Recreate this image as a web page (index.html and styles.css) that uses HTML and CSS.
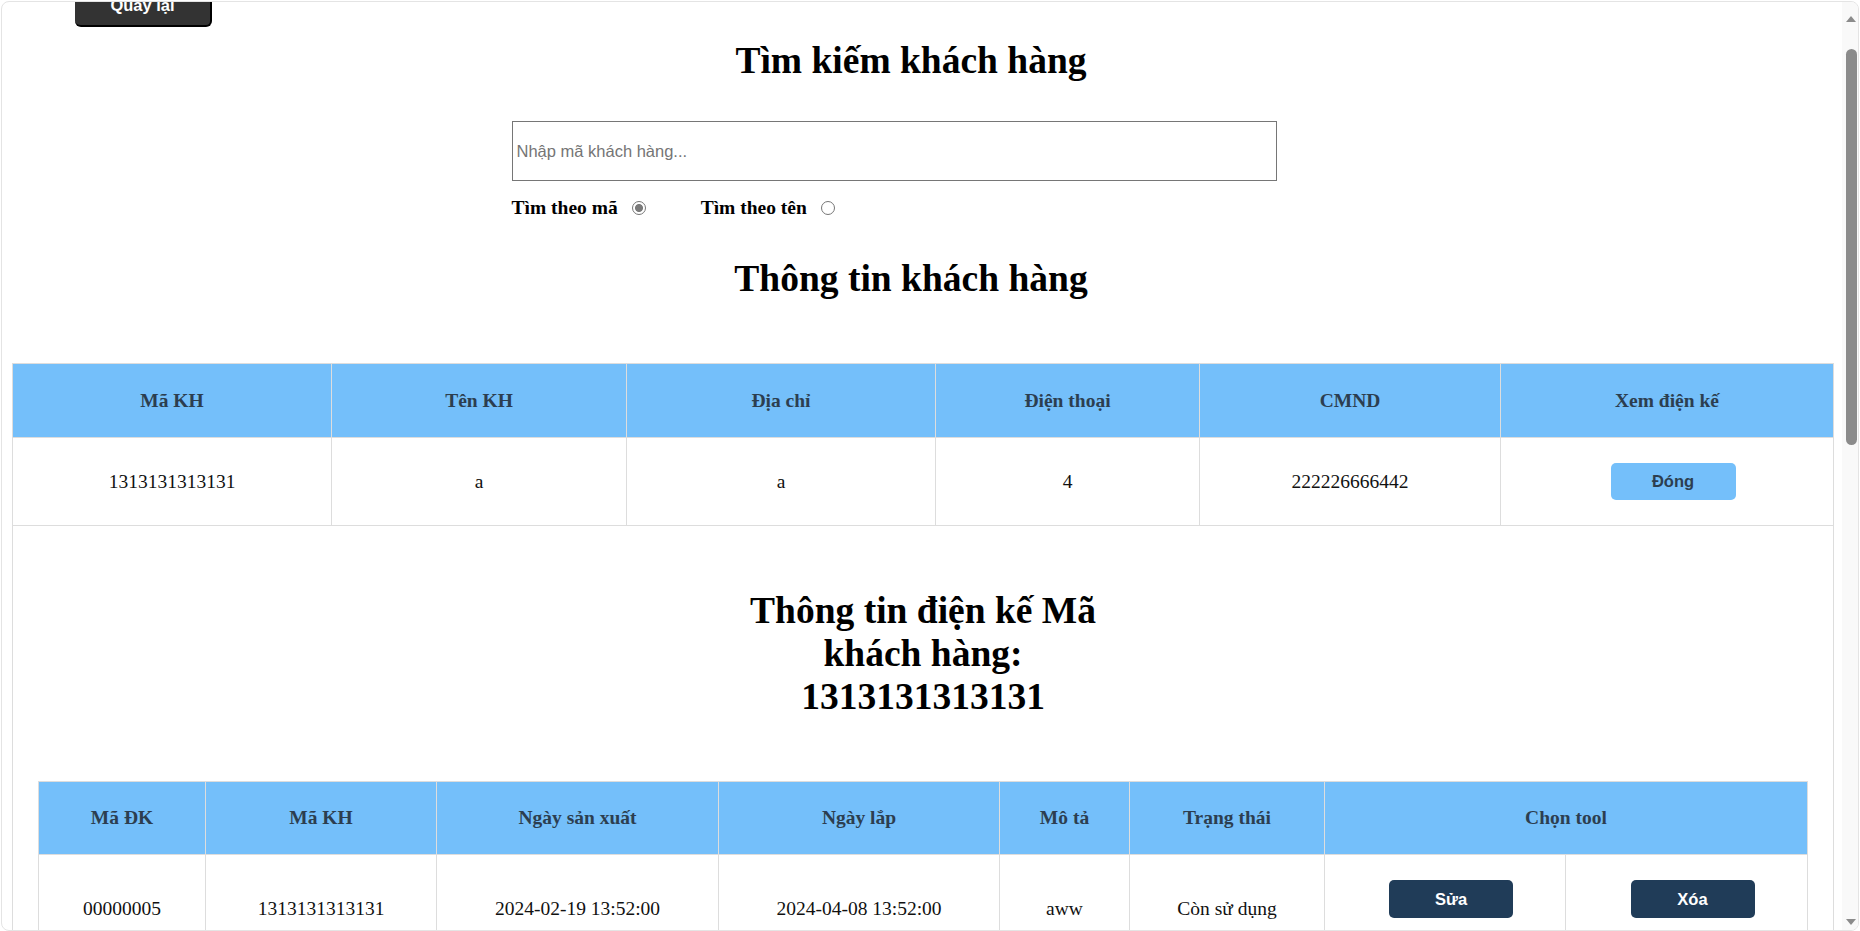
FILE: index.html
```html
<!DOCTYPE html>
<html lang="vi">
  <head>
    <meta charset="UTF-8" />
    <meta name="viewport" content="width=device-width, initial-scale=1.0" />
    <title>Tìm kiếm khách hàng</title>
    <link rel="stylesheet" href="styles.css">
  </head>
  <body>
    <div class="frame">
      <div class="page">
        <!-- nút quay lại -->
        <button class="back-btn">Quay lại</button>

        <!-- khu vực tìm kiếm -->
        <section class="search">
          <h1 class="title">Tìm kiếm khách hàng</h1>
          <div class="search-box">
            <input class="search-input" type="text" placeholder="Nhập mã khách hàng..." />
            <div class="mode-row">
              <label class="mode">Tìm theo mã <input type="radio" name="mode" value="ma" checked /></label>
              <label class="mode">Tìm theo tên <input type="radio" name="mode" value="ten" /></label>
            </div>
          </div>
          <h1 class="title">Thông tin khách hàng</h1>
        </section>

        <!-- bảng khách hàng -->
        <table class="grid customer">
          <colgroup>
            <col /><col /><col /><col /><col /><col />
          </colgroup>
          <thead>
            <tr>
              <th>Mã KH</th>
              <th>Tên KH</th>
              <th>Địa chỉ</th>
              <th>Điện thoại</th>
              <th>CMND</th>
              <th>Xem điện kế</th>
            </tr>
          </thead>
          <tbody>
            <tr>
              <td>1313131313131</td>
              <td>a</td>
              <td>a</td>
              <td>4</td>
              <td>222226666442</td>
              <td><button class="btn btn-light">Đóng</button></td>
            </tr>
            <tr>
              <td class="meter-cell" colspan="6">
                <h1 class="meter-title">Thông tin điện kế Mã khách hàng: 1313131313131</h1>

                <!-- bảng điện kế -->
                <table class="grid meter">
                  <colgroup>
                    <col /><col /><col /><col /><col /><col /><col /><col />
                  </colgroup>
                  <thead>
                    <tr>
                      <th>Mã ĐK</th>
                      <th>Mã KH</th>
                      <th>Ngày sản xuất</th>
                      <th>Ngày lắp</th>
                      <th>Mô tả</th>
                      <th>Trạng thái</th>
                      <th colspan="2">Chọn tool</th>
                    </tr>
                  </thead>
                  <tbody>
                    <tr>
                      <td>00000005</td>
                      <td>1313131313131</td>
                      <td>2024-02-19 13:52:00</td>
                      <td>2024-04-08 13:52:00</td>
                      <td>aww</td>
                      <td>Còn sử dụng</td>
                      <td><button class="btn btn-dark">Sửa</button></td>
                      <td><button class="btn btn-dark">Xóa</button></td>
                    </tr>
                  </tbody>
                </table>
              </td>
            </tr>
          </tbody>
        </table>
      </div>

      <!-- thanh cuộn -->
      <div class="scrollbar">
        <span class="scroll-arrow up"></span>
        <div class="scroll-track"><span class="scroll-thumb"></span></div>
        <span class="scroll-arrow down"></span>
      </div>
    </div>
  </body>
</html>
```

FILE: styles.css
```css
* {
  box-sizing: border-box;
}

body {
  margin: 0;
  padding: 1px 1px 0;

  font-family: "Liberation Serif", "Times New Roman", serif;
  font-size: 19.5px;
  color: #000;
  background-color: #fff;
}

/* khung trang */
.frame {
  display: flex;
  height: calc(100vh - 1px);
  border: 1px solid #e4e4e4;
  border-radius: 8px;
  overflow: hidden;
}

.page {
  flex: 1;
  min-width: 0;
  padding: 0 10px;
}

/* thanh cuộn */
.scrollbar {
  display: flex;
  flex: none;
  flex-direction: column;
  width: 16px;

  background-color: #f9f9f9;
}

.scroll-arrow {
  display: flex;
  justify-content: center;
  height: 17px;
}

.scroll-arrow::before {
  content: "";
  width: 0;
  height: 0;
  border-right: 5px solid transparent;
  border-left: 5px solid transparent;
}

.scroll-arrow.up {
  align-items: flex-end;
  height: 27px;
  padding: 0 0 7px 2px;
}

.scroll-arrow.up::before {
  border-bottom: 6px solid #8b8b8b;
}

.scroll-arrow.down {
  align-items: center;
  padding-left: 2px;
}

.scroll-arrow.down::before {
  border-top: 6px solid #8b8b8b;
}

.scroll-track {
  flex: 1;
}

.scroll-thumb {
  display: block;
  height: 396px;
  margin: 20px 1px 0 4px;
  border-radius: 6px;

  background-color: #8b8b8b;
}

.back-btn {
  display: block;
  width: 137px;
  height: 41px;
  margin: -16px 0 0 63px;
  border: none;
  border-right: 2px solid #000;
  border-bottom: 2px solid #000;
  border-radius: 6px;

  font-family: "Liberation Sans", Arial, sans-serif;
  font-size: 16.5px;
  font-weight: bold;
  color: #fff;

  background-color: #333;
  cursor: pointer;
}

.search {
  padding-right: 22px;
}

.title {
  margin: 12px 0 39px;

  text-align: center;
  font-size: 37.5px;
  line-height: normal;
}

.search .title + .search-box + .title {
  margin: 38px 0 63px;
}

.search-box {
  width: 799px;
  margin: 0 auto;
}

.search-input {
  display: block;
  width: 765px;
  height: 60px;
  padding: 0 4px;
  border: 1px solid #767676;
  border-radius: 0;

  font-family: "Liberation Sans", Arial, sans-serif;
  font-size: 16.5px;
}

.search-input::placeholder {
  color: #757575;
}

.mode-row {
  display: flex;
  align-items: center;
  height: 23px;
  margin-top: 15px;
}

.mode {
  display: flex;
  align-items: center;
  margin-right: 55px;

  font-weight: bold;
}

.mode input {
  appearance: none;
  width: 14px;
  height: 14px;
  margin: 0 0 0 14px;
  border: 1px solid #767676;
  border-radius: 50%;

  background-color: #fff;
}

.mode input:checked {
  background: radial-gradient(circle, #7a7a7a 0 3.6px, #fff 4.4px);
}

/* bảng */
.grid {
  width: 100%;
  border-collapse: collapse;
  table-layout: fixed;
}

.grid th,
.grid td {
  padding: 25px;
  border: 1px solid #ddd;

  text-align: center;
  line-height: 23px;
}

.grid th {
  font-weight: bold;
  color: #2c3e50;

  background-color: #74bffa;
}

.grid td {
  color: #111;
  vertical-align: middle;
}

.customer col:nth-child(1) { width: 319px; }
.customer col:nth-child(2) { width: 295px; }
.customer col:nth-child(3) { width: 309px; }
.customer col:nth-child(4) { width: 264px; }
.customer col:nth-child(5) { width: 301px; }
.customer col:nth-child(6) { width: 333px; }

.meter col:nth-child(1) { width: 167px; }
.meter col:nth-child(2) { width: 231px; }
.meter col:nth-child(3) { width: 282px; }
.meter col:nth-child(4) { width: 281px; }
.meter col:nth-child(5) { width: 130px; }
.meter col:nth-child(6) { width: 195px; }
.meter col:nth-child(7) { width: 241px; }
.meter col:nth-child(8) { width: 242px; }

.meter th {
  line-height: 22px;
}

.grid .meter-cell {
  vertical-align: top;
}

.meter-title {
  width: 400px;
  margin: 38px auto 63px;

  font-size: 37.5px;
  line-height: normal;
  color: #000;
}

.btn {
  display: inline-block;
  vertical-align: top;
  margin-left: 12px;
  border: none;
  border-radius: 5px;

  font-family: "Liberation Sans", Arial, sans-serif;
  font-size: 16.5px;
  font-weight: bold;

  cursor: pointer;
}

.btn-light {
  width: 125px;
  height: 37px;

  color: #2c3e50;
  background-color: #74bffa;
}

.btn-dark {
  width: 124px;
  height: 38px;
  margin-bottom: 18px;

  color: #fff;
  background-color: #203c58;
}
```
